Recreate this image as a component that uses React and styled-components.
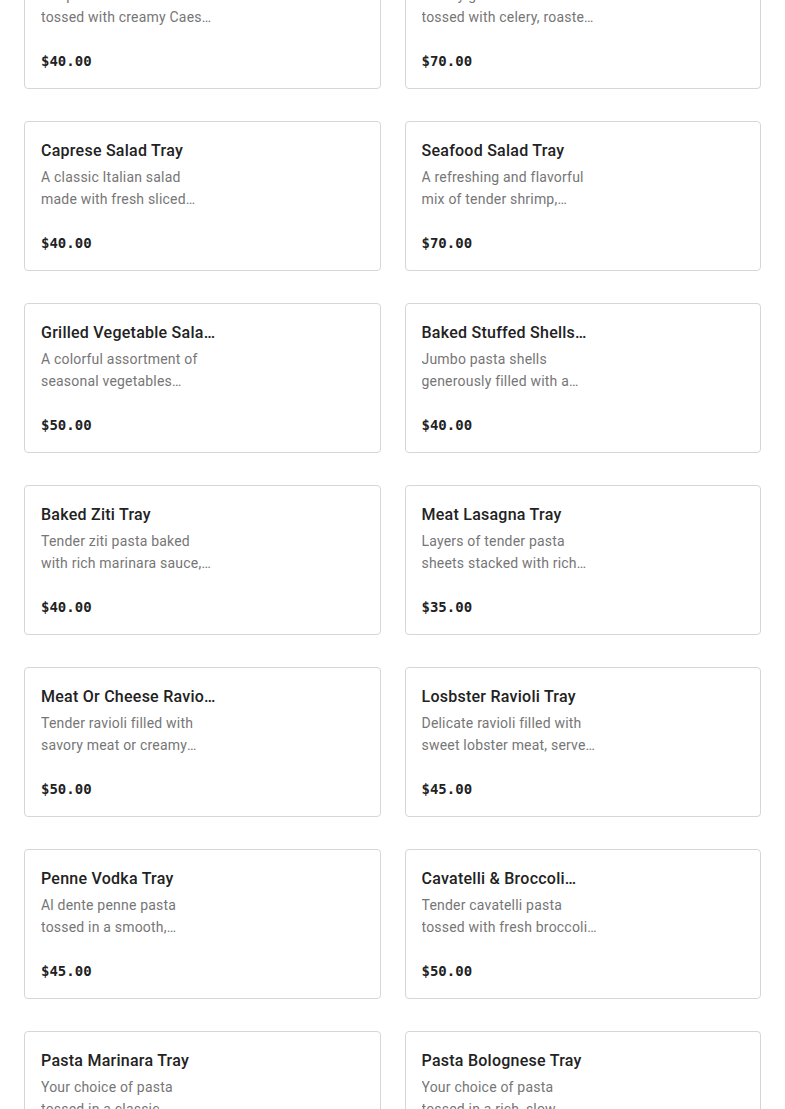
import React from "react";
import styled, { createGlobalStyle } from "styled-components";

const Global = createGlobalStyle`
  html, body { margin: 0; padding: 0; background: #ffffff; }
  body { font-family: Roboto, "Liberation Sans", Arial, sans-serif; overflow: hidden; }
  * { box-sizing: border-box; }
`;

const Page = styled.div`
  width: 785px;
  height: 1109px;
  overflow: hidden;
  padding: 0 24px;
`;

const Grid = styled.div`
  display: grid;
  grid-template-columns: 1fr 1fr;
  column-gap: 24px;
  row-gap: 32px;
  margin-top: -61px;
`;

const Card = styled.div`
  height: 150px;
  border: 1px solid #d6d6d6;
  border-radius: 4px;
  background: #fff;
  padding: 17px 16px 16px;
  display: flex;
  flex-direction: column;
`;

const Title = styled.div`
  width: 175px;
  height: 24px;
  font-family: Roboto, "Liberation Sans", sans-serif;
  font-weight: 500;
  font-size: 16px;
  letter-spacing: 0.25px;
  line-height: 24px;
  color: #222222;
  display: -webkit-box;
  -webkit-line-clamp: 1;
  -webkit-box-orient: vertical;
  overflow: hidden;
`;

const Desc = styled.div`
  width: 176px;
  margin-top: 3px;
  font-family: Roboto, "Liberation Sans", sans-serif;
  font-size: 14px;
  letter-spacing: 0.2px;
  line-height: 22px;
  color: #767676;
  display: -webkit-box;
  -webkit-line-clamp: 2;
  -webkit-box-orient: vertical;
  overflow: hidden;
  height: 44px;
`;

const Price = styled.div`
  margin-top: 23px;
  font-family: "DejaVu Sans Mono", "Liberation Mono", monospace;
  font-weight: 700;
  font-size: 14px;
  line-height: 20px;
  color: #222222;
`;

const items = [
  ["Caesar Salad Tray", "Crisp romaine lettuce tossed with creamy Caesar dressing, croutons and parmesan.", "$40.00"],
  ["Chicken Salad Tray", "Savory grilled chicken tossed with celery, roasted peppers and mayo.", "$70.00"],
  ["Caprese Salad Tray", "A classic Italian salad made with fresh sliced mozzarella and tomatoes.", "$40.00"],
  ["Seafood Salad Tray", "A refreshing and flavorful mix of tender shrimp, calamari and scungilli.", "$70.00"],
  ["Grilled Vegetable Salad Tray", "A colorful assortment of seasonal vegetables expertly grilled to perfection.", "$50.00"],
  ["Baked Stuffed Shells Tray", "Jumbo pasta shells generously filled with a delicious ricotta blend.", "$40.00"],
  ["Baked Ziti Tray", "Tender ziti pasta baked with rich marinara sauce, ricotta and mozzarella.", "$40.00"],
  ["Meat Lasagna Tray", "Layers of tender pasta sheets stacked with rich flavorful meat sauce.", "$35.00"],
  ["Meat Or Cheese Ravioli Tray", "Tender ravioli filled with savory meat or creamy ricotta cheese.", "$50.00"],
  ["Losbster Ravioli Tray", "Delicate ravioli filled with sweet lobster meat, served in a pink sauce.", "$45.00"],
  ["Penne Vodka Tray", "Al dente penne pasta tossed in a smooth, luxurious vodka sauce.", "$45.00"],
  ["Cavatelli & Broccoli Tray", "Tender cavatelli pasta tossed with fresh broccoli, garlic and oil.", "$50.00"],
  ["Pasta Marinara Tray", "Your choice of pasta tossed in a classic marinara sauce.", "$40.00"],
  ["Pasta Bolognese Tray", "Your choice of pasta tossed in a rich, slow-cooked meat sauce.", "$45.00"],
];

export default function App() {
  return (
    <Page>
      <Global />
      <Grid>
        {items.map(([t, d, p]) => (
          <Card key={t}>
            <Title>{t}</Title>
            <Desc>{d}</Desc>
            <Price>{p}</Price>
          </Card>
        ))}
      </Grid>
    </Page>
  );
}
